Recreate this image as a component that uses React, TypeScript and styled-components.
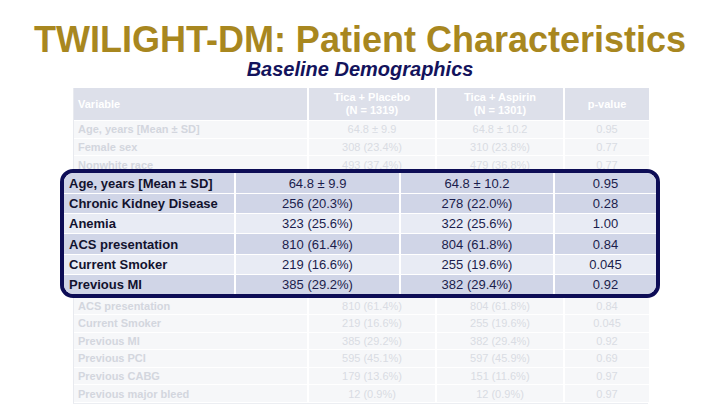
import React from "react";
import styled, { createGlobalStyle } from "styled-components";

const GlobalStyle = createGlobalStyle`
  html, body { margin: 0; padding: 0; background: #ffffff; }
  body { font-family: "Liberation Sans", Arial, sans-serif; }
`;

const Slide = styled.div`
  width: 720px;
  height: 405px;
  overflow: hidden;
  background: #ffffff;
  display: flex;
  flex-direction: column;
  align-items: center;
`;

const Title = styled.h1`
  margin: 22px 0 0;
  font-size: 36px;
  line-height: 36px;
  font-weight: 700;
  color: #a8871f;
  white-space: nowrap;
`;

const Subtitle = styled.h2`
  margin: 1px 0 0;
  font-size: 20px;
  line-height: 20px;
  font-weight: 700;
  font-style: italic;
  color: #13135c;
  white-space: nowrap;
`;

const TableArea = styled.div`
  position: relative;
  align-self: flex-start;
  margin: 9px 0 0 73px;
  width: 575px;
`;

const BgTable = styled.div`
  display: grid;
  grid-template-columns: 235px 128px 128px 84px;
  grid-template-rows: 33px repeat(16, 1fr);
  height: 315px;
  border-left: 1px solid #e8eaef;
  border-bottom: 1px solid #eceef2;
`;

const HeadCell = styled.div<{ $left?: boolean; $last?: boolean }>`
  background: #dde0ea;
  color: #ffffff;
  font-size: 11px;
  line-height: 13px;
  font-weight: 700;
  display: flex;
  align-items: center;
  justify-content: ${(p) => (p.$left ? "flex-start" : "center")};
  text-align: center;
  padding-left: ${(p) => (p.$left ? "4px" : "0")};
  border-right: ${(p) => (p.$last ? "none" : "2px solid #ffffff")};
  border-bottom: 1px solid #ffffff;
`;

const BodyCell = styled.div<{ $left?: boolean; $last?: boolean }>`
  background: #f6f7f9;
  color: ${(p) => (p.$left ? "#d3d6de" : "#d9dce3")};
  font-size: 11px;
  font-weight: ${(p) => (p.$left ? 700 : 400)};
  display: flex;
  align-items: center;
  justify-content: ${(p) => (p.$left ? "flex-start" : "center")};
  padding-left: ${(p) => (p.$left ? "4px" : "0")};
  border-right: ${(p) => (p.$last ? "none" : "2px solid #ffffff")};
  border-bottom: 1px solid #ffffff;
  white-space: nowrap;
  overflow: hidden;
`;

const Overlay = styled.div`
  position: absolute;
  left: -13px;
  top: 81px;
  width: 600px;
  height: 129px;
  box-sizing: border-box;
  border: 4px solid #0d0d56;
  border-radius: 13px;
  overflow: hidden;
  display: grid;
  grid-template-rows: repeat(6, 1fr);
  background: #ffffff;
`;

const HiRow = styled.div<{ $light?: boolean; $first?: boolean }>`
  display: grid;
  grid-template-columns: 172px 165px 154px 1fr;
  background: ${(p) => (p.$light ? "#e8ebf4" : "#d0d5e7")};
  border-top: ${(p) => (p.$first ? "none" : "1px solid #ffffff")};
`;

const HiLabel = styled.div`
  display: flex;
  align-items: center;
  padding-left: 5px;
  font-size: 13px;
  font-weight: 700;
  color: #12122e;
  white-space: nowrap;
  border-right: 2px solid #ffffff;
`;

const HiValue = styled.div<{ $last?: boolean }>`
  display: flex;
  align-items: center;
  justify-content: center;
  font-size: 13px;
  color: #1b1d4c;
  white-space: nowrap;
  border-right: ${(p) => (p.$last ? "none" : "2px solid #ffffff")};
`;

// Rows hidden beneath the highlight box are left blank.
const bgRows: [string, string, string, string][] = [
  ["Age, years [Mean ± SD]", "64.8 ± 9.9", "64.8 ± 10.2", "0.95"],
  ["Female sex", "308 (23.4%)", "310 (23.8%)", "0.77"],
  ["Nonwhite race", "493 (37.4%)", "479 (36.8%)", "0.77"],
  ["", "", "", ""],
  ["", "", "", ""],
  ["", "", "", ""],
  ["", "", "", ""],
  ["", "", "", ""],
  ["", "", "", ""],
  ["", "", "", ""],
  ["ACS presentation", "810 (61.4%)", "804 (61.8%)", "0.84"],
  ["Current Smoker", "219 (16.6%)", "255 (19.6%)", "0.045"],
  ["Previous MI", "385 (29.2%)", "382 (29.4%)", "0.92"],
  ["Previous PCI", "595 (45.1%)", "597 (45.9%)", "0.69"],
  ["Previous CABG", "179 (13.6%)", "151 (11.6%)", "0.97"],
  ["Previous major bleed", "12 (0.9%)", "12 (0.9%)", "0.97"],
];

const hiRows: [string, string, string, string][] = [
  ["Age, years  [Mean ± SD]", "64.8 ± 9.9", "64.8 ± 10.2", "0.95"],
  ["Chronic Kidney Disease", "256 (20.3%)", "278 (22.0%)", "0.28"],
  ["Anemia", "323 (25.6%)", "322 (25.6%)", "1.00"],
  ["ACS presentation", "810 (61.4%)", "804 (61.8%)", "0.84"],
  ["Current Smoker", "219 (16.6%)", "255 (19.6%)", "0.045"],
  ["Previous MI", "385 (29.2%)", "382 (29.4%)", "0.92"],
];

const lightRows = [false, false, true, false, true, false];

export default function App() {
  return (
    <>
      <GlobalStyle />
      <Slide>
        <Title>TWILIGHT-DM: Patient Characteristics</Title>
        <Subtitle>Baseline Demographics</Subtitle>
        <TableArea>
          <BgTable>
            <HeadCell $left>Variable</HeadCell>
            <HeadCell>
              Tica + Placebo
              <br />
              (N = 1319)
            </HeadCell>
            <HeadCell>
              Tica + Aspirin
              <br />
              (N = 1301)
            </HeadCell>
            <HeadCell $last>p-value</HeadCell>
            {bgRows.map((r, i) => (
              <React.Fragment key={i}>
                <BodyCell $left>{r[0]}</BodyCell>
                <BodyCell>{r[1]}</BodyCell>
                <BodyCell>{r[2]}</BodyCell>
                <BodyCell $last>{r[3]}</BodyCell>
              </React.Fragment>
            ))}
          </BgTable>
          <Overlay>
            {hiRows.map((r, i) => (
              <HiRow key={r[0]} $light={lightRows[i]} $first={i === 0}>
                <HiLabel>{r[0]}</HiLabel>
                <HiValue>{r[1]}</HiValue>
                <HiValue>{r[2]}</HiValue>
                <HiValue $last>{r[3]}</HiValue>
              </HiRow>
            ))}
          </Overlay>
        </TableArea>
      </Slide>
    </>
  );
}
